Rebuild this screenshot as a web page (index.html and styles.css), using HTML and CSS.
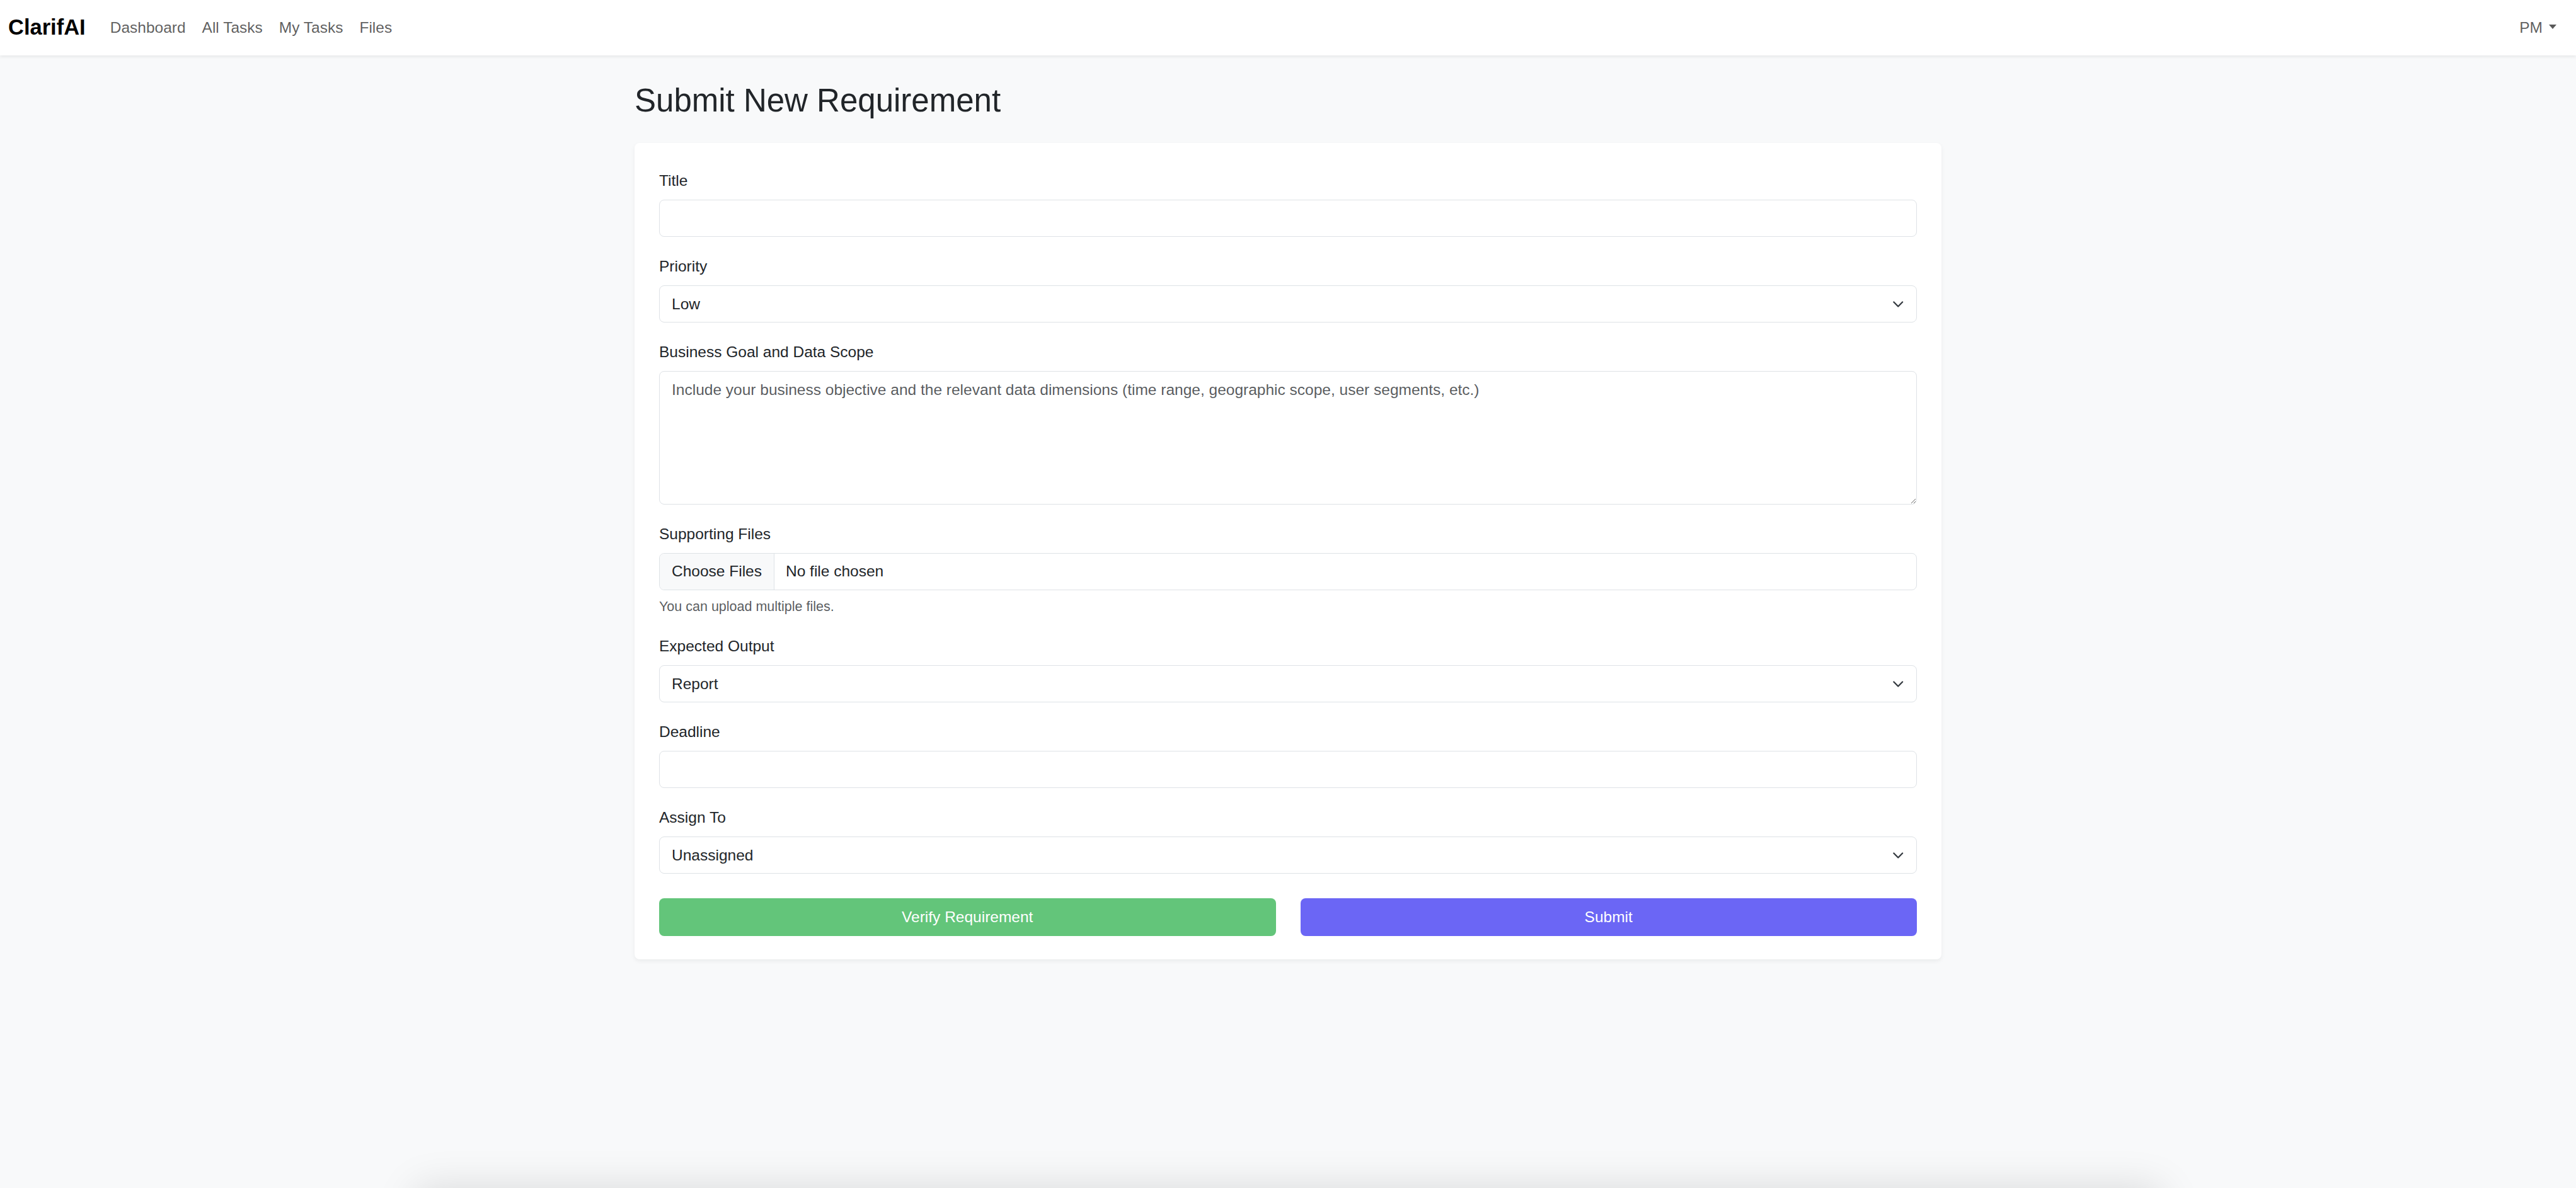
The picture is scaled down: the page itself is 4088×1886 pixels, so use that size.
FILE: index.html
```html
<!DOCTYPE html>
<html lang="en">
<head>
<meta charset="utf-8">
<title>ClarifAI - Submit New Requirement</title>
<link rel="stylesheet" href="styles.css">
</head>
<body>
<nav class="navbar">
  <div class="nav-left">
    <a class="brand" href="#">ClarifAI</a>
    <ul class="nav-links">
      <li><a href="#">Dashboard</a></li>
      <li><a href="#">All Tasks</a></li>
      <li><a href="#">My Tasks</a></li>
      <li><a href="#">Files</a></li>
    </ul>
  </div>
  <div class="nav-user">PM <span class="caret"></span></div>
</nav>

<main class="page">
  <h2 class="page-title">Submit New Requirement</h2>
  <form class="card">
    <div class="field">
      <label class="field-label" for="title">Title</label>
      <input id="title" class="control" type="text">
    </div>
    <div class="field">
      <label class="field-label" for="priority">Priority</label>
      <div class="select-wrap">
        <select id="priority" class="control select">
          <option>Low</option>
          <option>Medium</option>
          <option>High</option>
        </select>
        <svg class="chevron" viewBox="0 0 16 16"><path d="M2 5l6 6 6-6"/></svg>
      </div>
    </div>
    <div class="field">
      <label class="field-label" for="goal">Business Goal and Data Scope</label>
      <textarea id="goal" class="control area" placeholder="Include your business objective and the relevant data dimensions (time range, geographic scope, user segments, etc.)"></textarea>
    </div>
    <div class="field">
      <label class="field-label" for="files">Supporting Files</label>
      <div class="file-control">
        <input id="files" class="file-hidden" type="file" multiple>
        <span class="file-btn">Choose Files</span>
        <span class="file-name">No file chosen</span>
      </div>
      <div class="form-text">You can upload multiple files.</div>
    </div>
    <div class="field">
      <label class="field-label" for="output">Expected Output</label>
      <div class="select-wrap">
        <select id="output" class="control select">
          <option>Report</option>
          <option>Dashboard</option>
          <option>Dataset</option>
        </select>
        <svg class="chevron" viewBox="0 0 16 16"><path d="M2 5l6 6 6-6"/></svg>
      </div>
    </div>
    <div class="field">
      <label class="field-label" for="deadline">Deadline</label>
      <input id="deadline" class="control" type="text">
    </div>
    <div class="field">
      <label class="field-label" for="assign">Assign To</label>
      <div class="select-wrap">
        <select id="assign" class="control select">
          <option>Unassigned</option>
        </select>
        <svg class="chevron" viewBox="0 0 16 16"><path d="M2 5l6 6 6-6"/></svg>
      </div>
    </div>
    <div class="actions">
      <button type="button" class="btn btn-verify">Verify Requirement</button>
      <button type="submit" class="btn btn-submit">Submit</button>
    </div>
  </form>
</main>

<div class="bottom-sheet" aria-hidden="true"></div>
</body>
</html>
```

FILE: styles.css
```css
html, body {
  height: 100%;
}

body {
  margin: 0;
  background: #f8f9fa;
  font-family: "Liberation Sans", Arial, sans-serif;
  font-size: 24.5px;
  line-height: 1.5;
  color: #212529;
  overflow: hidden;
}

/* ---------- Navbar ---------- */
.navbar {
  box-sizing: border-box;
  height: 88px;
  background: #fff;
  box-shadow: 0 2px 5px rgba(0, 0, 0, 0.08);
  display: flex;
  align-items: center;
  justify-content: space-between;
  padding: 0 31px 0 13px;
  position: relative;
  z-index: 2;
}

.nav-left {
  display: flex;
  align-items: center;
}

.brand {
  font-size: 34.5px;
  font-weight: 700;
  color: #000;
  text-decoration: none;
  margin-right: 26px;
}

.nav-links {
  display: flex;
  list-style: none;
  margin: 0;
  padding: 0;
}

.nav-links a {
  display: block;
  padding: 0 13px;
  color: rgba(0, 0, 0, 0.65);
  text-decoration: none;
}

.nav-user {
  display: flex;
  align-items: center;
  gap: 10px;
  color: rgba(0, 0, 0, 0.65);
}

.caret {
  width: 0;
  height: 0;
  border-top: 7px solid currentColor;
  border-left: 6.5px solid transparent;
  border-right: 6.5px solid transparent;
  margin-bottom: 3px;
}

/* ---------- Page ---------- */
.page {
  width: 2074px;
  margin: 41px auto 0;
}

.page-title {
  font-size: 51px;
  font-weight: 400;
  line-height: 1.2;
  margin: 0 0 37px;
  color: #212529;
}

.card {
  display: block;
  background: #fff;
  border-radius: 8px;
  box-shadow: 0 3px 7px rgba(0, 0, 0, 0.06);
  padding: 41px 39px 37px;
}

.field {
  margin-bottom: 28px;
}

.field-label {
  display: block;
  line-height: 37px;
  margin-bottom: 12px;
}

.control {
  box-sizing: border-box;
  display: block;
  width: 100%;
  height: 59px;
  margin: 0;
  padding: 10px 19px;
  font: inherit;
  line-height: 37px;
  color: #212529;
  background: #fff;
  border: 1px solid #dee2e6;
  border-radius: 8px;
  outline: none;
}

.area {
  height: 212px;
  resize: vertical;
}

.area::placeholder {
  color: rgba(33, 37, 41, 0.75);
}

.select-wrap {
  position: relative;
}

.select {
  appearance: none;
  -webkit-appearance: none;
  padding-right: 60px;
}

.chevron {
  position: absolute;
  right: 18px;
  top: 50%;
  width: 24.5px;
  height: 18.4px;
  transform: translateY(-50%);
  pointer-events: none;
  fill: none;
  stroke: #343a40;
  stroke-width: 2;
  stroke-linecap: round;
  stroke-linejoin: round;
}

/* ---------- File input ---------- */
.file-control {
  box-sizing: border-box;
  display: flex;
  align-items: stretch;
  height: 59px;
  border: 1px solid #dee2e6;
  border-radius: 8px;
  overflow: hidden;
  background: #fff;
  cursor: pointer;
}

.file-hidden {
  display: none;
}

.file-btn {
  display: flex;
  align-items: center;
  padding: 0 19px;
  background: #f8f9fa;
  border-right: 1px solid #dee2e6;
  color: #212529;
}

.file-name {
  display: flex;
  align-items: center;
  padding-left: 18px;
  color: #212529;
}

.form-text {
  margin-top: 10px;
  font-size: 21.5px;
  line-height: 32px;
  color: rgba(33, 37, 41, 0.75);
}

/* ---------- Buttons ---------- */
.actions {
  display: grid;
  grid-template-columns: 1fr 1fr;
  gap: 39px;
  margin-top: 39px;
}

.btn {
  height: 60px;
  border: 0;
  border-radius: 8px;
  font: inherit;
  color: #fff;
  cursor: pointer;
}

.btn-verify {
  background: #63c57a;
}

.btn-submit {
  background: #6b66f5;
}

/* ---------- Panel peeking below the viewport ---------- */
.bottom-sheet {
  position: fixed;
  left: 660px;
  right: 658px;
  top: 100%;
  height: 300px;
  background: #fff;
  box-shadow: 0 0 60px rgba(0, 0, 0, 0.13);
}
```
